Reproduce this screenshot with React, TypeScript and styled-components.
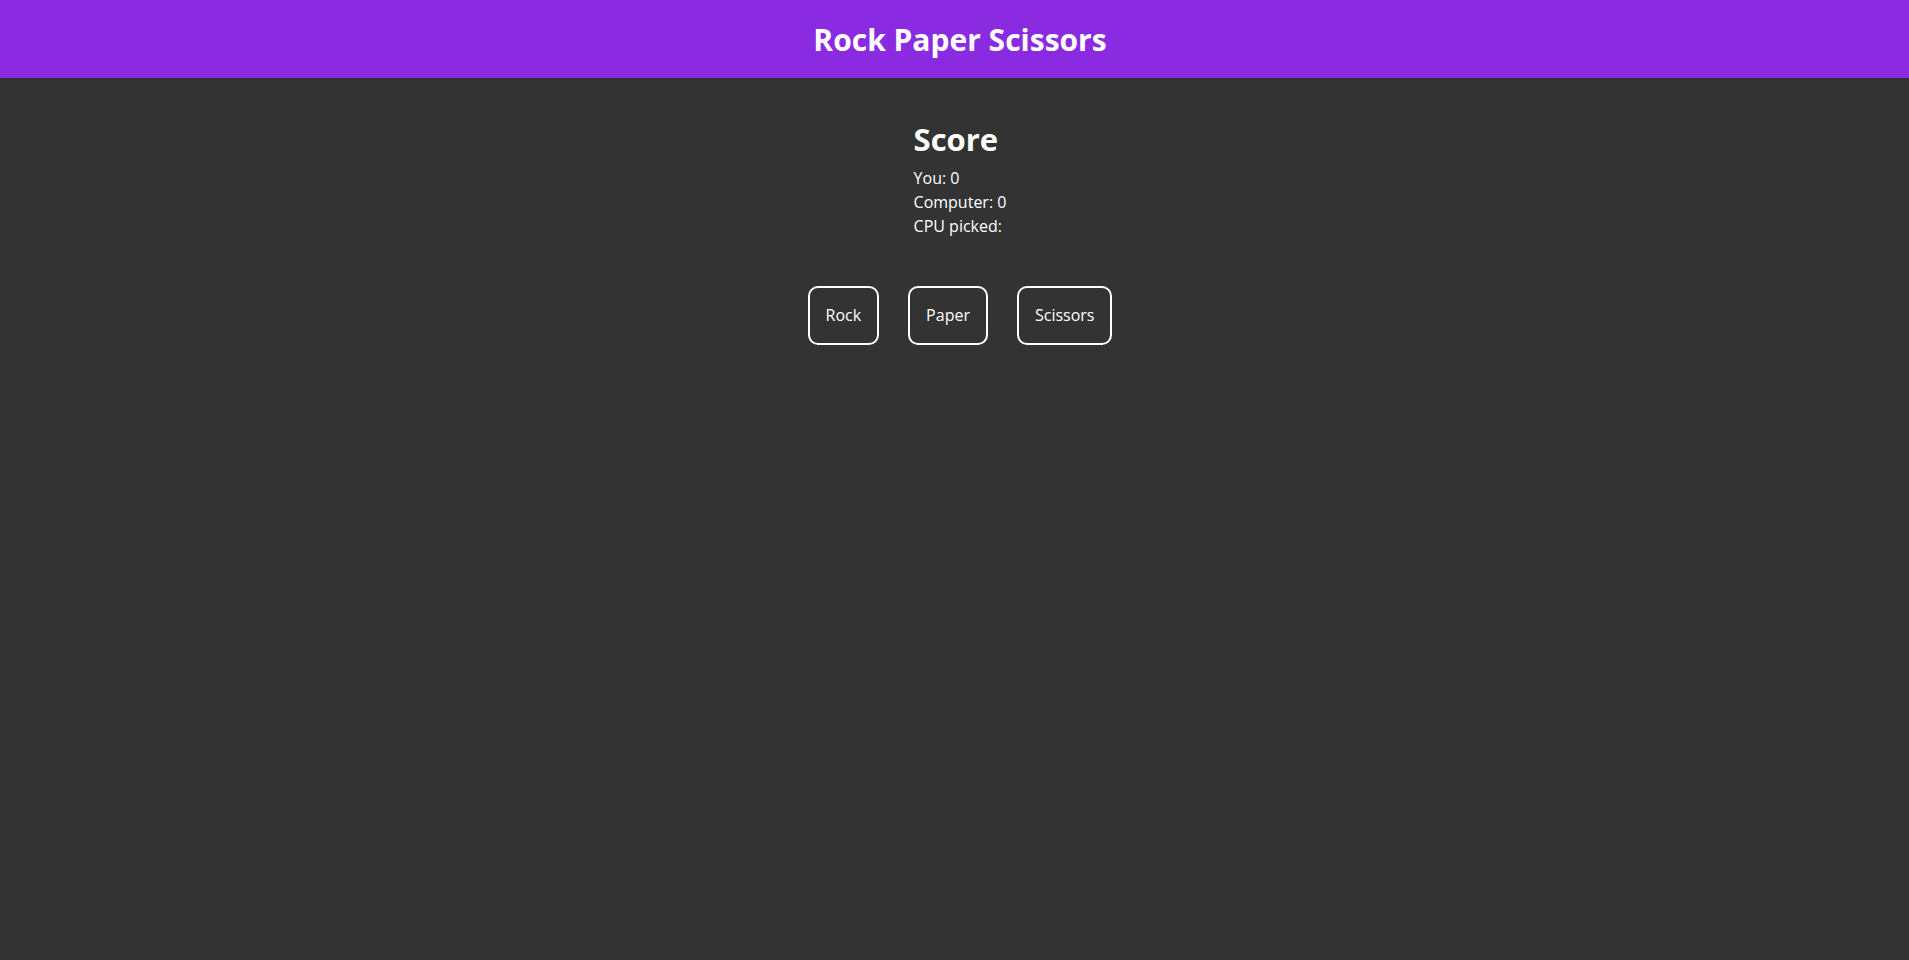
import React from "react";
import styled, { createGlobalStyle } from "styled-components";

const Global = createGlobalStyle`
  html, body { margin: 0; padding: 0; background: #333333; }
  body { font-family: "Open Sans", "Noto Sans", sans-serif; color: #ffffff; min-height: 960px; }
`;

const Header = styled.header`
  background: #8a2be2;
  height: 78px;
  box-sizing: border-box;
  padding-left: 11px;
  display: flex;
  align-items: center;
  justify-content: center;
`;

const Title = styled.h1`
  margin: 0;
  font-size: 30px;
  font-weight: 700;
  color: #fff;
`;

const Main = styled.main`
  display: flex;
  flex-direction: column;
  align-items: center;
  padding-top: 40px;
  padding-left: 11px;
`;

const ScoreBoard = styled.section`
  display: flex;
  flex-direction: column;
  align-items: flex-start;
`;

const ScoreTitle = styled.h2`
  margin: 0 0 5px;
  font-size: 31px;
  font-weight: 700;
  line-height: 1.4;
`;

const Line = styled.div`
  font-size: 16px;
  line-height: 24px;
`;

const Buttons = styled.div`
  display: flex;
  gap: 29px;
  margin-top: 48px;
`;

const Choice = styled.button`
  font-family: "Open Sans", "Noto Sans", sans-serif;
  font-size: 16px;
  line-height: 23px;
  color: #fff;
  background: transparent;
  border: 2px solid #fff;
  border-radius: 10px;
  padding: 16px 16px;
  cursor: pointer;
`;

export default function App() {
  return (
    <>
      <Global />
      <Header>
        <Title>Rock Paper Scissors</Title>
      </Header>
      <Main>
        <ScoreBoard>
          <ScoreTitle>Score</ScoreTitle>
          <Line>You: 0</Line>
          <Line>Computer: 0</Line>
          <Line>CPU picked: </Line>
        </ScoreBoard>
        <Buttons>
          <Choice>Rock</Choice>
          <Choice>Paper</Choice>
          <Choice>Scissors</Choice>
        </Buttons>
      </Main>
    </>
  );
}
